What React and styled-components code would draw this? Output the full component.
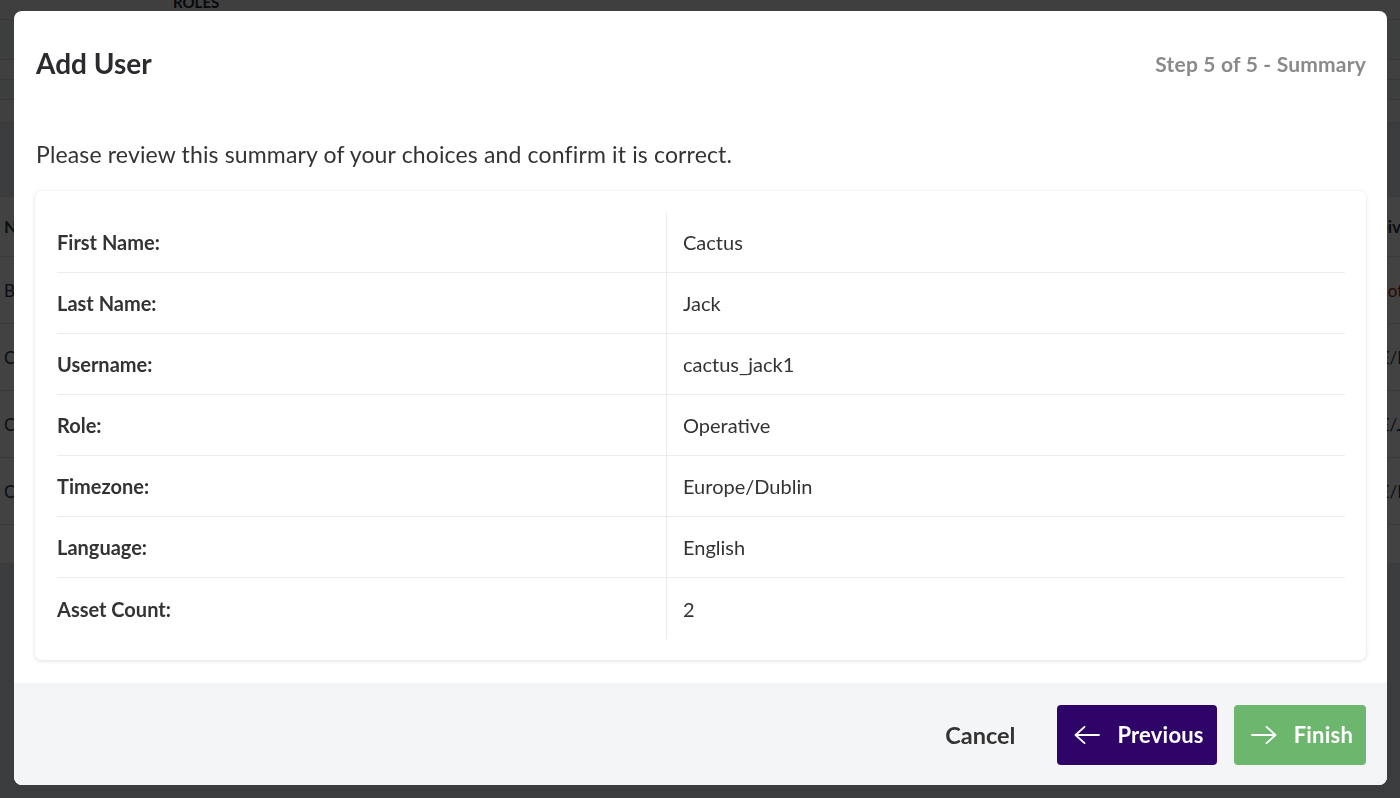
import React from "react";
import styled, { createGlobalStyle } from "styled-components";

const GlobalStyle = createGlobalStyle`
  html, body {
    margin: 0;
    padding: 0;
    height: 100%;
  }
  body {
    font-family: Lato, "Open Sans", Arial, sans-serif;
    background: #e4e6ea;
    color: #333;
    overflow: hidden;
  }
`;

const summary = [
  ["First Name:", "Cactus"],
  ["Last Name:", "Jack"],
  ["Username:", "cactus_jack1"],
  ["Role:", "Operative"],
  ["Timezone:", "Europe/Dublin"],
  ["Language:", "English"],
  ["Asset Count:", "2"],
];

const people = [
  ["Bill Brady", "Administrator", "Not set", true],
  ["Chris Cole", "Operative", "IE/Dublin"],
  ["Conor Casey", "Operative", "IE/Jersey"],
  ["Cara Quinn", "Supervisor", "IE/Dublin"],
];

export default function App() {
  return (
    <>
      <GlobalStyle />
      <UsersPage />
      <Overlay>
        <Modal>
          <ModalHeader>
            <Title>Add User</Title>
            <StepLabel>Step 5 of 5 - Summary</StepLabel>
          </ModalHeader>
          <ModalBody>
            <Intro>
              Please review this summary of your choices and confirm it is
              correct.
            </Intro>
            <SummaryCard>
              <SummaryTable>
                {summary.map(([label, value]) => (
                  <SummaryRow key={label}>
                    <LabelCell>{label}</LabelCell>
                    <ValueCell>{value}</ValueCell>
                  </SummaryRow>
                ))}
              </SummaryTable>
            </SummaryCard>
          </ModalBody>
          <ModalFooter>
            <CancelButton>Cancel</CancelButton>
            <StepButton variant="previous">
              <Arrow dir="left" />
              Previous
            </StepButton>
            <StepButton variant="finish">
              <Arrow dir="right" />
              Finish
            </StepButton>
          </ModalFooter>
        </Modal>
      </Overlay>
    </>
  );
}

// users list sitting under the dialog
function UsersPage() {
  return (
    <Page>
      <TopHeader>
        <HeaderCell>Users</HeaderCell>
        <HeaderCell>Roles</HeaderCell>
      </TopHeader>
      <FilterBar size={40} />
      <FilterBar size={20} light />
      <FilterBar size={20} />
      <FilterBar size={23} light />
      <TableWrap>
        <PageRow head>
          <PageCell>Name</PageCell>
          <PageCell>Role</PageCell>
          <PageCell>Division</PageCell>
        </PageRow>
        {people.map(([name, role, division, warn]) => (
          <PageRow key={name}>
            <PageCell>{name}</PageCell>
            <PageCell>{role}</PageCell>
            <PageCell warn={warn}>{division}</PageCell>
          </PageRow>
        ))}
        <TableTail />
      </TableWrap>
    </Page>
  );
}

function Arrow({ dir }) {
  const d =
    dir === "left"
      ? "M25 9H1.5 M10.5 0.8 L1.5 9 L10.5 17.2"
      : "M1 9H24.5 M15.5 0.8 L24.5 9 L15.5 17.2";
  return (
    <ArrowSvg viewBox="0 0 26 18" width="26" height="18">
      <path
        d={d}
        fill="none"
        stroke="#fff"
        strokeWidth="1.8"
        strokeLinecap="round"
        strokeLinejoin="round"
      />
    </ArrowSvg>
  );
}

const Page = styled.div`
  width: 100%;
  height: 100vh;
  display: flex;
  flex-direction: column;
  background: #e4e6ea;
  font-size: 17px;
`;

const TopHeader = styled.div`
  height: 20px;
  box-sizing: border-box;
  display: flex;
  align-items: flex-end;
  background: #f2f3f5;
  border-bottom: 1px solid #d6d8dc;
`;

const HeaderCell = styled.div`
  text-transform: uppercase;
  font-size: 15px;
  font-weight: 700;
  color: #222;
  line-height: 15px;
  margin-bottom: 9px;
  &:first-child {
    width: 173px;
    color: transparent;
  }
`;

const FilterBar = styled.div`
  height: ${(p) => p.size}px;
  box-sizing: border-box;
  background: ${(p) => (p.light ? "#f7f7f8" : "#ecedf0")};
  border-bottom: 1px solid #d6d8dc;
`;

const TableWrap = styled.div`
  margin-top: 74px;
  background: #fff;
  display: flex;
  flex-direction: column;
`;

const PageRow = styled.div`
  display: grid;
  grid-template-columns: 640px 731px 1fr;
  height: ${(p) => (p.head ? "60px" : "67px")};
  box-sizing: border-box;
  align-items: center;
  border-bottom: 1px solid #dcdee2;
  font-weight: ${(p) => (p.head ? 700 : 400)};
  color: #1f3a4d;
`;

const PageCell = styled.div`
  white-space: nowrap;
  overflow: hidden;
  padding-left: 4px;
  color: ${(p) => (p.warn ? "#a32020" : "inherit")};
`;

const TableTail = styled.div`
  height: 38px;
`;

const Overlay = styled.div`
  position: fixed;
  inset: 0;
  background: rgba(0, 0, 0, 0.74);
  display: flex;
  padding: 11px 13px 13px 14px;
  box-sizing: border-box;
`;

const Modal = styled.div`
  flex: 1;
  display: flex;
  flex-direction: column;
  background: #fff;
  border-radius: 8px;
  overflow: hidden;
`;

const ModalHeader = styled.div`
  display: flex;
  align-items: center;
  justify-content: space-between;
  padding: 36px 21px 0 22px;
`;

const Title = styled.h2`
  margin: 0;
  font-size: 28px;
  line-height: 32px;
  font-weight: 700;
  color: #2b2b2f;
`;

const StepLabel = styled.div`
  font-size: 21px;
  font-weight: 700;
  color: #8a8a8a;
  letter-spacing: 0.2px;
`;

const ModalBody = styled.div`
  flex: 1;
  padding: 0 21px 23px;
  display: flex;
  flex-direction: column;
`;

const Intro = styled.p`
  margin: 61px 0 23px 1px;
  font-size: 23px;
  line-height: 28px;
  letter-spacing: 0.15px;
  color: #333;
`;

const SummaryCard = styled.div`
  background: #fff;
  border-radius: 6px;
  box-shadow: 0 1px 4px rgba(0, 0, 0, 0.12), 0 0 1px rgba(0, 0, 0, 0.08);
  padding: 21px 21px 21px 22px;
`;

const SummaryTable = styled.div`
  display: flex;
  flex-direction: column;
`;

const SummaryRow = styled.div`
  display: grid;
  grid-template-columns: 609px 1fr;
  height: 61px;
  box-sizing: border-box;
  border-bottom: 1px solid #ececee;
  &:last-child {
    border-bottom: none;
  }
`;

const LabelCell = styled.div`
  display: flex;
  align-items: center;
  font-size: 20px;
  font-weight: 700;
  color: #333;
`;

const ValueCell = styled.div`
  display: flex;
  align-items: center;
  font-size: 20px;
  color: #333;
  padding-left: 16px;
  border-left: 1px solid #ececee;
`;

const ModalFooter = styled.div`
  height: 103px;
  box-sizing: border-box;
  background: #f4f5f7;
  display: flex;
  align-items: center;
  justify-content: flex-end;
  padding: 1px 21px 0;
`;

const CancelButton = styled.button`
  background: none;
  border: none;
  font-family: inherit;
  font-size: 23.5px;
  font-weight: 700;
  color: #333;
  padding: 0;
  margin-right: 42px;
  cursor: pointer;
`;

const StepButton = styled.button`
  height: 60px;
  display: flex;
  align-items: center;
  gap: 17px;
  padding: 0 13px 0 17px;
  border: none;
  border-radius: 4px;
  font-family: inherit;
  font-size: 22px;
  font-weight: 700;
  letter-spacing: 0.2px;
  color: #fff;
  background: ${(p) => (p.variant === "finish" ? "#6cb66d" : "#2e0469")};
  margin-left: ${(p) => (p.variant === "finish" ? "17px" : "0")};
  cursor: pointer;
`;

const ArrowSvg = styled.svg`
  display: block;
  flex-shrink: 0;
`;
